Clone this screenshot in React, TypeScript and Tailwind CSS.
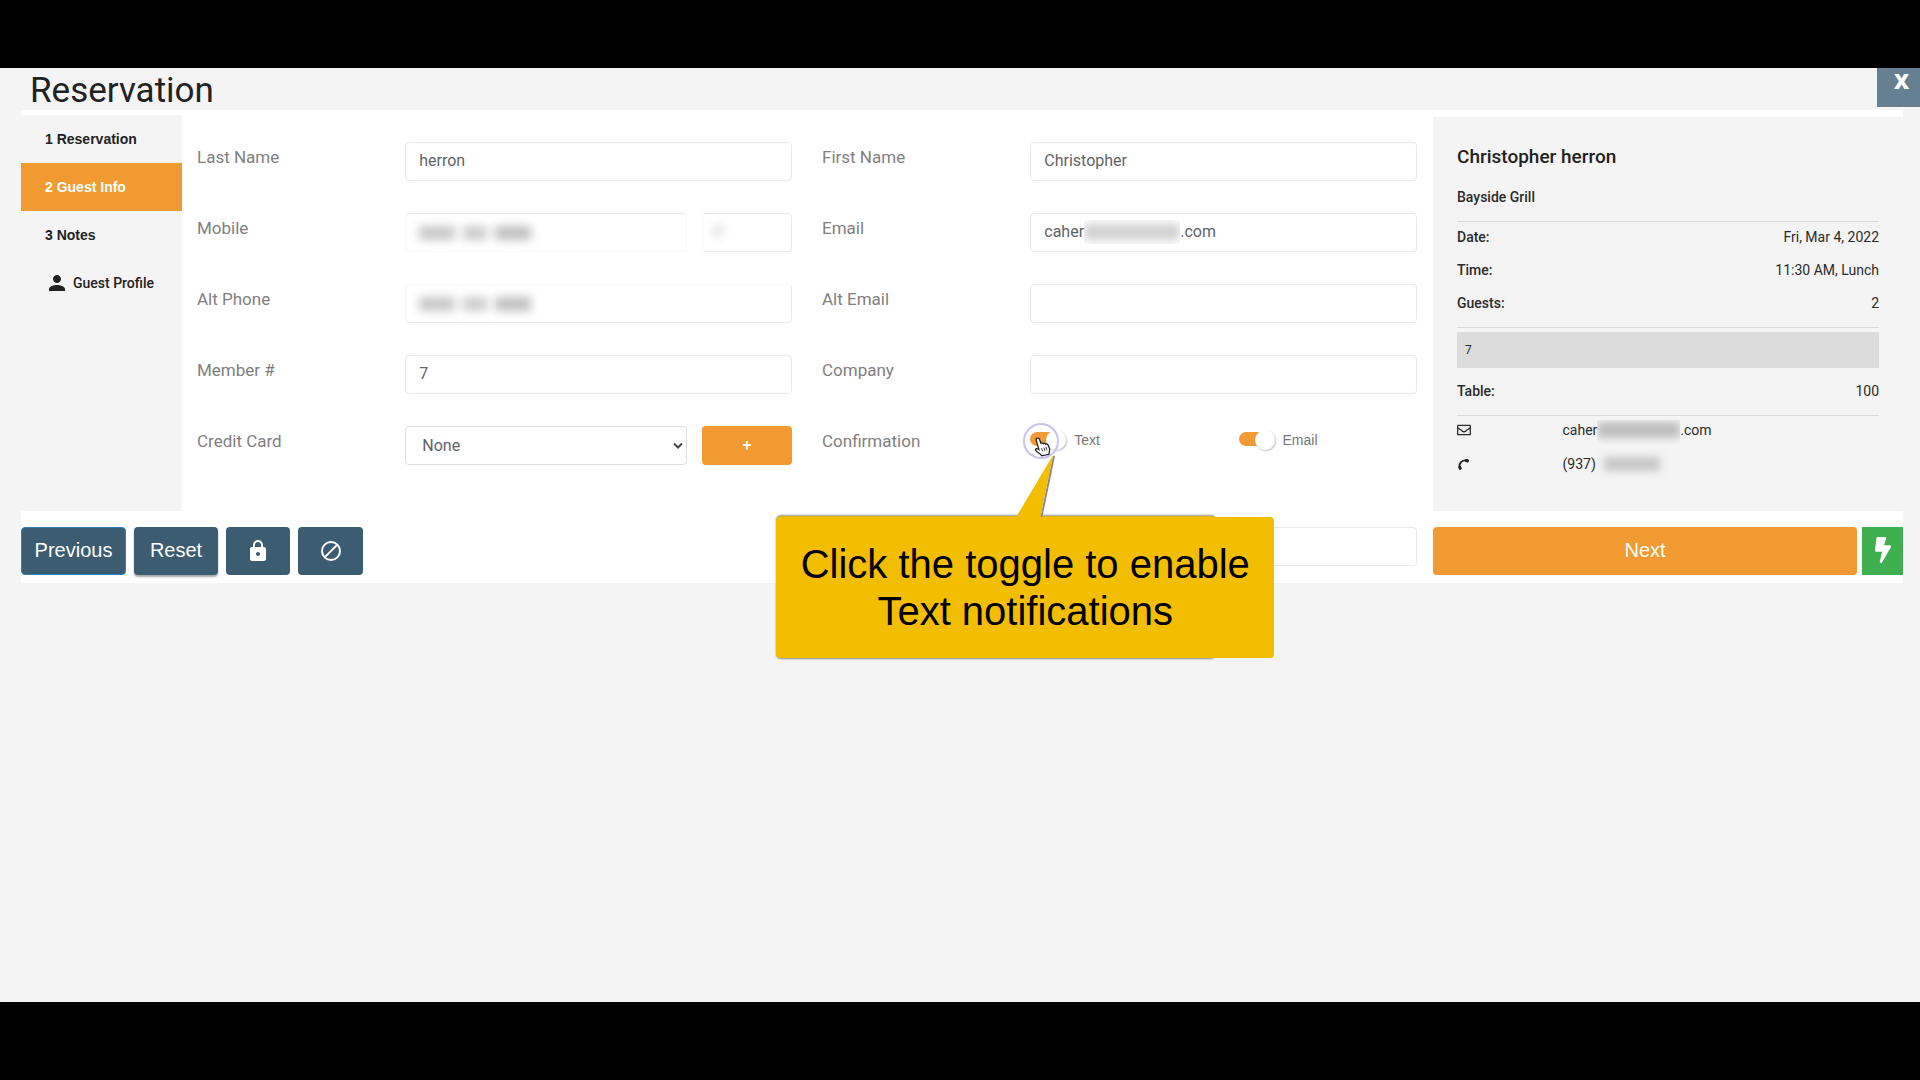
import React, { useState } from 'react';
import { MdLock, MdPerson } from 'react-icons/md';
import { FaBolt, FaRegEnvelope } from 'react-icons/fa';

const inputClass =
  'block h-[39px] w-full min-w-0 rounded border border-[#e9e9e9] bg-white px-[13px] pb-0.5 text-base text-[#5f6368] outline-none focus:border-[#f19a31]';

const Field = ({ id, label, children }: { id?: string; label: string; children: React.ReactNode }) => (
  <div className="grid h-[39px] grid-cols-[7fr_13fr] items-start">
    {id ? (
      <label htmlFor={id} className="pt-[3px] text-[17px] leading-6 text-[#808080]">{label}</label>
    ) : (
      <span className="pt-[3px] text-[17px] leading-6 text-[#808080]">{label}</span>
    )}
    {children}
  </div>
);

// Valor oculto: manchas difuminadas en lugar del texto
const HiddenPhone = () => (
  <span className="pointer-events-none absolute inset-y-0 left-3.5 flex items-center gap-2 blur-[5px]" aria-hidden="true">
    <span className="h-3.5 w-9 bg-[#c8c8c8]" />
    <span className="h-3.5 w-6 bg-[#cccccc]" />
    <span className="h-3.5 w-9 bg-[#c0c0c0]" />
  </span>
);

const Toggle = ({ label, children }: { label: string; children?: React.ReactNode }) => {
  const [on, setOn] = useState(true);
  return (
    <div className="relative flex h-7 items-center">
      <label className="flex cursor-pointer items-center font-['Liberation_Sans',sans-serif] text-sm text-[#777]">
        <span className="relative mr-2 block h-5 w-9">
          <input
            type="checkbox"
            checked={on}
            onChange={(e) => setOn(e.target.checked)}
            className="peer absolute inset-0 z-10 m-0 cursor-pointer opacity-0"
          />
          <span className="absolute top-[2px] left-0 h-3.5 w-[30px] rounded-full bg-[#ccc] peer-checked:bg-[#f09b38]" />
          <span className="absolute top-0 left-0 size-5 rounded-full bg-white shadow-[1px_1px_2px_rgba(0,0,0,0.25)] peer-checked:left-4" />
        </span>
        {label}
      </label>
      {children}
    </div>
  );
};

const Callout = () => (
  <div className="pointer-events-none absolute top-0 left-0 z-20 font-['Liberation_Sans',sans-serif]">
    <div className="absolute -top-[3px] -left-[7px] size-9 rounded-full border-2 border-[#c9c5ea]" />
    <svg className="absolute top-[11px] left-[4px]" width="18" height="20" viewBox="0 0 18 20" aria-hidden="true">
      <path
        d="M3.3 1.2c1-.4 1.9.2 2.2 1.1l1.3 3.8c.9-.6 2-.3 2.5.5.9-.6 2-.3 2.5.5.9-.4 1.9 0 2.3.9l1.4 3.5c.5 1.5.1 2.8-.3 4.2l-.3 1.6-7.1 1.5c-1.3-2.200-3.600-3-5.400-4.600-.9-.8-1.200-1.700-.6-2.300.8-.7 2-.2 3 .5L2.200 3.400c-.3-.9.2-1.900 1.100-2.200z"
        fill="#fff"
        stroke="#222"
        strokeWidth="1.3"
      />
      <path d="M7.6 11.2l1 3.2M9.9 10.6l1 3.2M12 10l1 3.2" stroke="#222" strokeWidth="0.9" />
    </svg>
    <div className="absolute top-[90px] -left-[253px] h-[142px] w-[438px] rounded bg-[#e0b20c] shadow-[0_0_2px_1px_rgba(80,80,90,0.6)]" />
    <svg className="absolute top-[29px] -left-4" width="44" height="64" viewBox="0 0 44 64" aria-hidden="true">
      <path d="M40 1 L27 64" stroke="#8c8c86" strokeWidth="2" />
      <path d="M39 0 L1 64 H26 Z" fill="#f3bd00" />
    </svg>
    <p className="absolute top-[91px] -left-[254px] flex h-[141px] w-[498px] items-center justify-center rounded bg-[#f3bd00] text-center text-[40px] leading-[47px] text-black">
      <span>Click the toggle to enable<br />Text notifications</span>
    </p>
  </div>
);

const steps = ['1 Reservation', '2 Guest Info', '3 Notes'];

const Sidebar = () => (
  <nav className="mt-[5px] bg-[#f4f4f4] text-sm text-[#222]">
    {steps.map((step, i) => (
      <button
        key={step}
        className={`flex h-12 w-full items-center pl-6 font-['Liberation_Sans',sans-serif] font-bold ${
          i === 1 ? 'bg-[#f19a31] text-white' : ''
        }`}
      >
        {step}
      </button>
    ))}
    <button className="flex h-12 w-full items-center gap-1 pl-6 font-medium">
      <MdPerson size={24} />
      Guest Profile
    </button>
  </nav>
);

const GuestForm = () => (
  <form className="grid grid-cols-2 content-start gap-x-[30px] gap-y-8 pt-8 pr-4 pl-[15px]">
    <Field id="lastName" label="Last Name">
      <input id="lastName" defaultValue="herron" className={inputClass} />
    </Field>
    <Field id="firstName" label="First Name">
      <input id="firstName" defaultValue="Christopher" className={inputClass} />
    </Field>

    <Field id="mobile" label="Mobile">
      <div className="flex gap-[15px]">
        <div className="relative flex-1">
          <input id="mobile" className={`${inputClass} border-x-[#f8f8f8] border-b-[#f8f8f8]`} />
          <HiddenPhone />
        </div>
        <div className="relative w-[90px]">
          <input aria-label="Extension" className={`${inputClass} border-l-[#fafafa]`} />
          <span className="pointer-events-none absolute top-3 left-2.5 h-3 w-3 bg-[#e8e8e8] blur-[4px]" />
        </div>
      </div>
    </Field>
    <Field id="email" label="Email">
      <div className="relative">
        <input id="email" defaultValue="caher" className={inputClass} />
        <span className="pointer-events-none absolute inset-y-0 left-[54px] flex items-center pb-0.5 text-base text-[#5f6368]">
          <span className="flex h-6 w-24 items-center overflow-hidden">
            <span className="h-4 w-full bg-[#d0d0d0] blur-[5px]" />
          </span>
          .com
        </span>
      </div>
    </Field>

    <Field id="altPhone" label="Alt Phone">
      <div className="relative">
        <input id="altPhone" className={`${inputClass} border-t-[#f8f8f8] border-l-[#f5f5f5]`} />
        <HiddenPhone />
      </div>
    </Field>
    <Field id="altEmail" label="Alt Email">
      <input id="altEmail" className={inputClass} />
    </Field>

    <Field id="member" label="Member #">
      <input id="member" defaultValue="7" className={inputClass} />
    </Field>
    <Field id="company" label="Company">
      <input id="company" className={inputClass} />
    </Field>

    <Field id="card" label="Credit Card">
      <div className="flex gap-[15px]">
        <div className="relative flex-1">
          <select
            id="card"
            className="h-[39px] w-full appearance-none rounded border border-[#dedede] bg-white pl-4 text-base text-[#5f6368] outline-none"
          >
            <option>None</option>
          </select>
          <svg className="pointer-events-none absolute top-4 right-1" width="10" height="8" viewBox="0 0 10 8" fill="none">
            <path d="M1 1.5 L5 5.5 L9 1.5" stroke="#444" strokeWidth="2" />
          </svg>
        </div>
        <button type="button" aria-label="Add card" className="flex h-[39px] w-[90px] items-center justify-center rounded bg-[#f19a31] text-base font-medium text-white">
          +
        </button>
      </div>
    </Field>
    <Field label="Confirmation">
      <div className="grid grid-cols-[7fr_6fr]">
        <Toggle label="Text">
          <Callout />
        </Toggle>
        <Toggle label="Email" />
      </div>
    </Field>
  </form>
);

const SummaryRow = ({ label, value }: { label: string; value: string }) => (
  <div className="flex justify-between">
    <dt className="font-medium">{label}</dt>
    <dd>{value}</dd>
  </div>
);

const Summary = () => (
  <aside className="mt-[7px] bg-[#f4f4f4] px-6 pt-7 text-sm leading-5 text-[#2b2b2b]">
    <h2 className="text-[19px] leading-6 font-medium text-[#222]">Christopher herron</h2>
    <h3 className="mt-[18px] font-medium">Bayside Grill</h3>
    <dl className="mt-3.5 flex flex-col gap-[13px] border-y border-[#d9d9d9] pt-[5px] pb-3.5">
      <SummaryRow label="Date:" value="Fri, Mar 4, 2022" />
      <SummaryRow label="Time:" value="11:30 AM, Lunch" />
      <SummaryRow label="Guests:" value="2" />
    </dl>
    <p className="mt-1 h-9 bg-[#dcdcdc] px-2 pt-2 text-xs leading-5">7</p>
    <dl className="border-b border-[#d9d9d9] pt-[13px] pb-3.5">
      <SummaryRow label="Table:" value="100" />
    </dl>
    <div className="mt-1 grid grid-cols-[1fr_3fr] gap-y-3.5">
      <FaRegEnvelope size={14} className="mt-[3px]" />
      <p className="flex h-5">
        caher
        <span className="h-6 w-[83px] overflow-hidden pt-0.5">
          <span className="block h-4 bg-[#bcbcbc] blur-[4px]" />
        </span>
        .com
      </p>
      <svg className="mt-1" width="13" height="13" viewBox="0 0 13 13" aria-hidden="true">
        <path d="M2.6 9.6 C1.600 5.400 5.400 1.800 9.400 2.600" stroke="#222" strokeWidth="1.8" fill="none" />
        <path d="M1.2 8.500 L3.800 8 L5 10.800 L2.900 12.200 C2 11.600 1.300 10.200 1.200 8.500z" fill="#222" />
        <path d="M8.400 1.200 C10 .9 11.400 1.400 12.200 2.500 L11 4.800 L8.200 3.800z" fill="#222" />
      </svg>
      <p className="flex items-center">
        (937)
        <span className="ml-2 h-3.5 w-14 bg-[#c6c6c6] blur-[4px]" />
      </p>
    </div>
  </aside>
);

const barButton = 'flex h-12 items-center justify-center rounded bg-[#3b5c71] text-xl text-white';

export default function App() {
  return (
    <div className="flex min-h-screen flex-col overflow-hidden bg-black pt-[68px] pb-[78px] font-[Roboto,sans-serif]">
      <main className="flex-1 bg-[#f4f4f4]">
        <header className="flex h-[42px] items-start justify-between pl-[30px]">
          <h1 className="text-[35px] leading-[46px] text-[#222]">Reservation</h1>
          <button aria-label="Close" className="flex h-[39px] w-[43px] justify-center bg-[#667f92] pl-1.5 font-['Open_Sans',sans-serif] text-[21px] leading-[26px] font-extrabold text-white">
            X
          </button>
        </header>

        <section className="mr-[17px] ml-[21px] bg-white pb-2">
          <div className="grid min-h-[401px] grid-cols-[161px_1fr_470px]">
            <Sidebar />
            <GuestForm />
            <Summary />
          </div>
          <div className="grid grid-cols-[161px_1fr_470px] pt-4">
            <div className="flex w-max gap-2 font-['Liberation_Sans',sans-serif]">
              <button className={`${barButton} w-[105px] border border-[#2f7fbd] pb-0.5`}>Previous</button>
              <button className={`${barButton} w-[84px] pb-0.5 shadow-[0_2px_2px_rgba(0,0,0,0.35)]`}>Reset</button>
              <button aria-label="Lock" className={`${barButton} w-16`}>
                <MdLock size={24} />
              </button>
              <button aria-label="Block" className={`${barButton} w-[65px]`}>
                <svg width="24" height="24" viewBox="0 0 24 24" fill="none" stroke="currentColor" strokeWidth="2">
                  <circle cx="12" cy="12" r="9" />
                  <path d="M5.6 18.4 L18.4 5.6" />
                </svg>
              </button>
            </div>
            <div className="grid grid-cols-2 gap-x-[30px] pr-4 pl-[15px]">
              <div className="col-start-2 grid grid-cols-[7fr_13fr]">
                <input aria-label="Code" className={`${inputClass} col-start-2`} />
              </div>
            </div>
            <div className="flex gap-[5px]">
              <button className="h-12 flex-1 rounded bg-[#f19a31] pb-0.5 font-['Liberation_Sans',sans-serif] text-xl text-white">Next</button>
              <button aria-label="Quick save" className="flex h-12 w-[41px] items-center justify-center bg-[#3fae4f] pb-0.5 text-white">
                <FaBolt size={26} />
              </button>
            </div>
          </div>
        </section>
      </main>
    </div>
  );
}
